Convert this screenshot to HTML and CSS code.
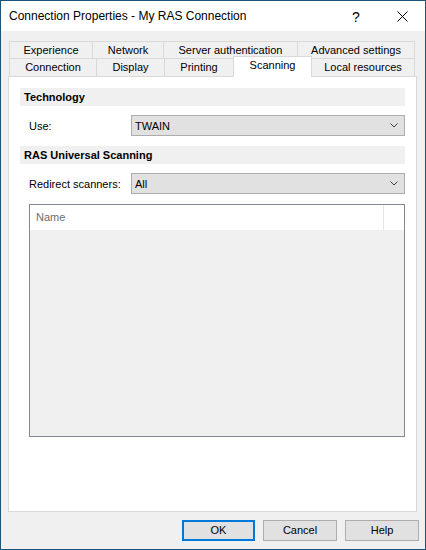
FILE: index.html
```
<!DOCTYPE html>
<html>
<head>
<meta charset="utf-8">
<link rel="stylesheet" href="styles.css">
</head>
<body>
<div class="window">
  <div class="titlebar">
    <div class="title">Connection Properties - My RAS Connection</div>
    <div class="tbtn help-q">?</div>
    <div class="tbtn close">
      <svg width="11" height="11" viewBox="0 0 11 11"><path d="M0.5 0.5 L10.5 10.5 M10.5 0.5 L0.5 10.5" stroke="#000" stroke-width="1" fill="none"/></svg>
    </div>
  </div>
  <div class="content">
    <div class="tabrow row1">
      <div class="tab w-exp">Experience</div>
      <div class="tab w-net">Network</div>
      <div class="tab w-srv">Server authentication</div>
      <div class="tab w-adv">Advanced settings</div>
    </div>
    <div class="tabrow row2">
      <div class="tab w-con">Connection</div>
      <div class="tab w-dis">Display</div>
      <div class="tab w-pri">Printing</div>
      <div class="tab w-sca selected">Scanning</div>
      <div class="tab w-loc">Local resources</div>
    </div>
    <div class="panel">
      <div class="section-head">Technology</div>
      <div class="field first">
        <div class="label">Use:</div>
        <div class="combo"><span>TWAIN</span>
          <svg class="chev" width="8" height="5" viewBox="0 0 8 5"><path d="M0.5 0.5 L4 4 L7.5 0.5" stroke="#404040" stroke-width="1" fill="none"/></svg>
        </div>
      </div>
      <div class="section-head second">RAS Universal Scanning</div>
      <div class="field first">
        <div class="label">Redirect scanners:</div>
        <div class="combo"><span>All</span>
          <svg class="chev" width="8" height="5" viewBox="0 0 8 5"><path d="M0.5 0.5 L4 4 L7.5 0.5" stroke="#404040" stroke-width="1" fill="none"/></svg>
        </div>
      </div>
      <div class="listbox">
        <div class="list-header">
          <div class="col-name">Name</div>
          <div class="col-rest"></div>
        </div>
        <div class="list-body"></div>
      </div>
    </div>
    <div class="buttons">
      <div class="btn ok">OK</div>
      <div class="btn">Cancel</div>
      <div class="btn">Help</div>
    </div>
  </div>
</div>
</body>
</html>
```
FILE: styles.css
```
* { box-sizing: border-box; }
html, body { margin: 0; padding: 0; }
body {
  width: 426px;
  height: 550px;
  font-family: "Liberation Sans", Arial, sans-serif;
  font-size: 11px;
  color: #000;
  overflow: hidden;
}
.window {
  width: 426px;
  height: 550px;
  border: 1px solid #1b5577;
  background: #f0f0f0;
  display: flex;
  flex-direction: column;
}
.titlebar {
  height: 30px;
  background: #fff;
  display: flex;
  align-items: center;
  flex: none;
}
.title {
  flex: 1;
  padding-left: 8px;
  font-size: 12px;
  color: #000;
}
.tbtn {
  width: 46px;
  height: 30px;
  display: flex;
  align-items: center;
  justify-content: center;
  font-size: 14px;
}
.help-q { padding-top: 1px; }
.content {
  flex: 1;
  padding: 10px 8px 0 7px;
  display: flex;
  flex-direction: column;
}
.tabrow {
  display: flex;
  margin-left: 1px;
  height: 18px;
  flex: none;
}
.row2 {
  margin-top: -1px;
  align-items: flex-end;
}
.tab {
  height: 18px;
  border: 1px solid #d9d9d9;
  margin-left: -1px;
  text-align: center;
  line-height: 16px;
  background: #f0f0f0;
  white-space: nowrap;
}
.tab:first-child { margin-left: 0; }
.row2 .tab {
  border-bottom: none;
  line-height: 17px;
}
.row2 .tab.selected {
  height: 21px;
  margin-bottom: -1px;
  background: #fff;
  z-index: 1;
  line-height: 17px;
}
.w-exp { width: 84px; }
.w-net { width: 72px; }
.w-srv { width: 135px; }
.w-adv { width: 118px; }
.w-con { width: 88px; }
.w-dis { width: 69px; }
.w-pri { width: 70px; }
.w-sca { width: 79px; }
.w-loc { width: 104px; }
.panel {
  width: 409px;
  height: 436px;
  flex: none;
  background: #fff;
  border: 1px solid #d9d9d9;
  padding: 11px 11px 0 11px;
  display: flex;
  flex-direction: column;
}
.section-head {
  height: 18px;
  background: #f0f0f0;
  font-weight: bold;
  line-height: 18px;
  padding-left: 4px;
  flex: none;
}
.section-head.second { margin-top: 10px; }
.field {
  display: flex;
  align-items: center;
  margin-top: 9px;
  height: 21px;
  flex: none;
}
.label {
  width: 111px;
  padding-left: 9px;
  flex: none;
}
.combo {
  flex: 1;
  height: 21px;
  background: #e1e1e1;
  border: 1px solid #adadad;
  display: flex;
  align-items: center;
  justify-content: space-between;
  padding: 0 6px 0 3px;
}
.chev { display: block; }
.listbox {
  margin: 10px 0 0 9px;
  height: 233px;
  border: 1px solid #828790;
  display: flex;
  flex-direction: column;
  flex: none;
}
.list-header {
  height: 25px;
  background: #fff;
  display: flex;
  flex: none;
}
.col-name {
  width: 354px;
  border-right: 1px solid #e5e5e5;
  padding-left: 6px;
  line-height: 25px;
  color: #6d6d6d;
}
.col-rest { flex: 1; }
.list-body {
  flex: 1;
  background: #f0f0f0;
}
.buttons {
  display: flex;
  justify-content: flex-end;
  gap: 8px;
  margin-top: 8px;
  padding-right: -2px;
  margin-right: -2px;
}
.btn {
  width: 74px;
  height: 21px;
  background: #e1e1e1;
  border: 1px solid #adadad;
  text-align: center;
  line-height: 19px;
}
.btn.ok {
  width: 73px;
  border: 2px solid #0078d7;
  line-height: 17px;
}
```
